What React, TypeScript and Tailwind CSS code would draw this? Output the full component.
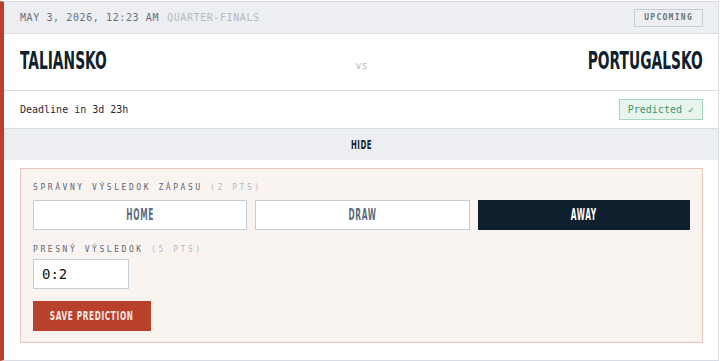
import React, { useState } from 'react';

const mono = "font-['DejaVu_Sans_Mono','Liberation_Mono',monospace]";
const cond = "font-['DejaVu_Sans_Condensed','Liberation_Sans',sans-serif] font-bold";

export default function App() {
  const [pick, setPick] = useState<'home' | 'draw' | 'away'>('away');
  const [score, setScore] = useState('0:2');

  const btn = (key: 'home' | 'draw' | 'away', label: string) => (
    <button
      key={key}
      onClick={() => setPick(key)}
      className={
        pick === key
          ? 'flex-1 h-[30px] flex items-center justify-center bg-[#0f1f2e] text-white'
          : 'flex-1 h-[30px] flex items-center justify-center bg-white border border-[#c4ccd6] text-[#5b6b80]'
      }
    >
      <span className={`${cond} inline-block text-[15px] tracking-[0.08em] scale-x-[0.55]`}>{label}</span>
    </button>
  );

  return (
    <div className="bg-white pt-px">
      <div className="w-[719px] h-[360px] border border-[#d9dde3] border-l-4 border-l-[#b9412c] flex flex-col">
        {/* Header */}
        <div className="h-[32px] bg-[#edeef1] border-b border-[#d9dde3] flex items-center justify-between pl-4 pr-[15px]">
          <div className={`${mono} text-[10px] tracking-[0.06em]`}>
            <span className="text-[#66707d]">MAY 3, 2026, 12:23 AM</span>
            <span className="text-[#b3bac4] ml-2">QUARTER-FINALS</span>
          </div>
          <span className={`${mono} h-[18px] px-[9px] flex items-center border border-[#c8ced6] text-[#6b7480] text-[8px] font-bold tracking-[0.16em]`}>
            UPCOMING
          </span>
        </div>

        {/* Teams */}
        <div className="h-[57px] border-b border-[#d9dde3] flex items-center justify-between pl-4 pr-[15px]">
          <div className="w-[200px]">
            <span className={`${cond} inline-block origin-left scale-x-[0.64] text-[24px] text-[#0f1f2e] leading-none`}>TALIANSKO</span>
          </div>
          <span className={`${mono} text-[10px] text-[#b3bac4] mt-[6px]`}>vs</span>
          <div className="w-[200px] text-right">
            <span className={`${cond} inline-block origin-right scale-x-[0.64] text-[24px] text-[#0f1f2e] leading-none`}>PORTUGALSKO</span>
          </div>
        </div>

        {/* Deadline */}
        <div className="h-[38px] border-b border-[#d9dde3] flex items-center justify-between pl-4 pr-[15px]">
          <span className={`${mono} text-[10px] text-[#1f2937]`}>Deadline in 3d 23h</span>
          <span className={`${mono} h-[21px] px-[8px] flex items-center bg-[#e8f5ee] border border-[#a8d5bf] text-[#3a9a6e] text-[10px]`}>
            Predicted ✓
          </span>
        </div>

        {/* Toggle */}
        <button className="h-[31px] bg-[#edeef1] text-[#0f1f2e] flex items-center justify-center">
          <span className={`${cond} inline-block text-[13px] tracking-[0.06em] scale-x-[0.6]`}>HIDE</span>
        </button>

        {/* Prediction form */}
        <div className="flex-1 pl-4 pr-[15px] pt-2">
          <div className="bg-[#faf4f1] border border-[#e8c4bb] px-3 pt-[13px] pb-[11px]">
            <div className={`${mono} text-[8px] tracking-[0.32em] text-[#5b6573]`}>
              SPRÁVNY VÝSLEDOK ZÁPASU <span className="text-[#b3bac4]">(2 PTS)</span>
            </div>
            <div className="flex gap-2 mt-[6px]">
              {btn('home', 'HOME')}
              {btn('draw', 'DRAW')}
              {btn('away', 'AWAY')}
            </div>
            <div className={`${mono} text-[8px] tracking-[0.32em] text-[#5b6573] mt-[14px]`}>
              PRESNÝ VÝSLEDOK <span className="text-[#b3bac4]">(5 PTS)</span>
            </div>
            <input
              value={score}
              onChange={(e) => setScore(e.target.value)}
              className={`${mono} mt-[3px] block w-[96px] h-[30px] bg-white border border-[#c4ccd6] px-2 text-[14px] text-[#111] outline-none`}
            />
            <button className="mt-[12px] w-[118px] h-[30px] flex items-center justify-center bg-[#b9412c] text-[#f5e9e4]">
              <span className={`${cond} inline-block text-[12px] tracking-[0.08em] scale-x-[0.68] whitespace-nowrap`}>SAVE PREDICTION</span>
            </button>
          </div>
        </div>
      </div>
    </div>
  );
}
